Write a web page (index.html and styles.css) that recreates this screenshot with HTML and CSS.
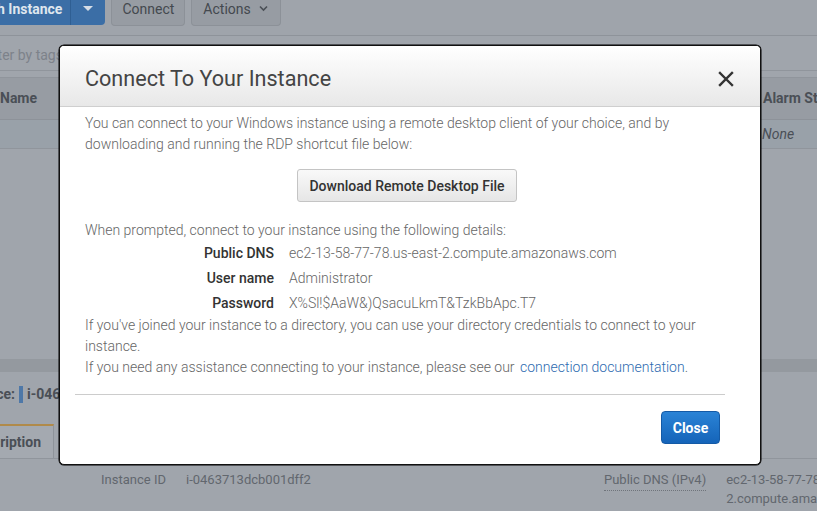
FILE: index.html
```html
<!DOCTYPE html>
<html>
<head>
<meta charset="utf-8">
<link rel="stylesheet" href="styles.css">
</head>
<body>
<div class="page">
  <div class="toolbar">
    <div class="btn-launch"><span class="launch-text">Launch Instance</span><span class="launch-caret"><svg width="12" height="8" viewBox="0 0 12 8"><path d="M1 1 L6 6 L11 1 Z" fill="#d6dde6"/></svg></span></div>
    <div class="btn-gray">Connect</div>
    <div class="btn-gray actions">Actions <svg width="9" height="7" viewBox="0 0 9 7"><path d="M1 1.5 L4.5 5 L8 1.5" fill="none" stroke="#4a4f56" stroke-width="1.6"/></svg></div>
  </div>
  <div class="filter-row"><div class="filter-input">Filter by tags and attributes or search by keyword</div></div>
  <div class="grid-head"><span class="col-name">Name</span><span class="col-alarm">Alarm Status</span></div>
  <div class="grid-row"><span class="col-alarm none">None</span></div>
  <div class="grid-empty"></div>
  <div class="splitter"></div>
  <div class="instance-line"><span class="inst-label">Instance:</span><span class="inst-mark"></span><span class="inst-id">i-0463713dcb001dff2</span></div>
  <div class="tabs"><div class="tab active">Description</div><div class="tab">Status Checks</div></div>
  <div class="details">
    <div class="det-col">
      <span class="det-label">Instance ID</span><span class="det-value">i-0463713dcb001dff2</span>
    </div>
    <div class="det-col right">
      <span class="det-label dotted">Public DNS (IPv4)</span><span class="det-value">ec2-13-58-77-78.us-east-<br>2.compute.amazonaws.com</span>
    </div>
  </div>
</div>

<div class="modal">
  <div class="modal-head">
    <h1>Connect To Your Instance</h1>
    <svg class="close-x" width="16" height="16" viewBox="0 0 16 16"><path d="M2 2 L14 14 M14 2 L2 14" stroke="#333" stroke-width="2.4" stroke-linecap="square"/></svg>
  </div>
  <div class="modal-body">
    <p>You can connect to your Windows instance using a remote desktop client of your choice, and by downloading and running the RDP shortcut file below:</p>
    <div class="dl-wrap"><button class="btn-dl">Download Remote Desktop File</button></div>
    <p>When prompted, connect to your instance using the following details:</p>
    <div class="details-table">
      <span class="k">Public DNS</span><span class="v">ec2-13-58-77-78.us-east-2.compute.amazonaws.com</span>
      <span class="k">User name</span><span class="v">Administrator</span>
      <span class="k">Password</span><span class="v">X%Sl!$AaW&amp;)QsacuLkmT&amp;TzkBbApc.T7</span>
    </div>
    <p class="after">If you've joined your instance to a directory, you can use your directory credentials to connect to your instance.<br>If you need any assistance connecting to your instance, please see our <a class="link">connection documentation</a>.</p>
  </div>
  <div class="modal-foot"><button class="btn-close">Close</button></div>
</div>
</body>
</html>
```

FILE: styles.css
```css
html, body { margin: 0; padding: 0; }
body {
  width: 817px; height: 511px; overflow: hidden;
  background: #a0a5ac;
  font-family: Roboto, "Liberation Sans", sans-serif;
  position: relative;
}
.page { width: 817px; height: 511px; background: #a0a5ac; color: #4a4f56; font-size: 14px; overflow: hidden; }

.toolbar {
  height: 35px; border-bottom: 1px solid #8e939a; display: flex; align-items: flex-start; gap: 6px;
  background: #9fa4ab;
}
.btn-launch {
  display: flex; margin-left: -49px; margin-top: -8px; height: 33px; border-radius: 0 0 4px 4px; overflow: hidden;
  background: #3b6ea6; color: #dfe6ee; font-weight: 700; font-size: 14px; flex-shrink: 0;
}
.launch-text { padding: 0 8px; line-height: 34px; white-space: nowrap; }
.launch-caret { width: 34px; display: flex; align-items: center; justify-content: center; border-left: 1px solid #2f5f93; }
.btn-gray {
  margin-top: -8px; height: 33px; line-height: 34px; padding: 0 10px; background: #979ca3; border: 1px solid #8c9198;
  border-top: 0; border-radius: 0 0 4px 4px; font-size: 14px; color: #44494f; display: flex; align-items: center; gap: 6px;
}
.btn-gray.actions { padding: 0 12px 0 11px; gap: 8px; }
.filter-row { height: 34px; border-bottom: 1px solid #90959c; background: #a0a5ac; }
.filter-input { margin-left: -17px; line-height: 38px; color: #7d828a; font-size: 14px; white-space: nowrap; }
.grid-head {
  margin-top: 6px; height: 41px; border-top: 1px solid #90959c; border-bottom: 1px solid #8d9299; background: #979ca3;
  position: relative; font-weight: 700; font-size: 14px; color: #4a4f56;
}
.col-name { position: absolute; left: 0; top: 12px; }
.grid-head .col-alarm { position: absolute; left: 763px; top: 12px; white-space: nowrap; }
.grid-row { height: 28px; background: #99a1a9; border-bottom: 1px solid #90959c; position: relative; }
.grid-row .none { position: absolute; left: 762px; top: 6px; font-style: italic; color: #4a4f56; font-size: 14px; }
.grid-empty { height: 210px; }
.splitter { height: 13px; background: #94999f; }
.instance-line { height: 44px; display: flex; align-items: center; gap: 4px; margin-left: -43px; font-weight: 700; color: #4a4f56; font-size: 14px; }
.inst-mark { width: 4px; height: 17px; background: #4e78a8; }
.tabs { display: flex; gap: 8px; margin: 8px 0 0 -44px; border-bottom: 1px solid #90959c; height: 34px; }
.tab { padding: 0 12px; line-height: 32px; border: 1px solid #8e939a; border-bottom: 0; background: #a4a9b0; font-size: 14px; color: #4a4f56; }
.tab.active { border-top: 2px solid #b08a4a; font-weight: 700; }
.details { display: flex; padding-top: 11px; }
.det-col { display: flex; gap: 20px; width: 500px; flex-shrink: 0; }
.det-col.right { width: auto; gap: 20px; margin-left: 104px; }
.det-label { width: 166px; text-align: right; color: #62676e; font-size: 13px; line-height: 19px; white-space: nowrap; flex-shrink: 0; }
.det-col.right .det-label { width: auto; }
.det-value { color: #62676e; font-size: 13px; line-height: 19px; white-space: nowrap; }
.dotted { border-bottom: 1px dotted #6f747b; height: 20px; }

.modal {
  position: absolute; left: 59px; top: 45px; width: 700px; height: 418px;
  background: #fff; border: 1px solid #111; border-radius: 5px; overflow: hidden;
  box-shadow: 0 0 0 0.5px #000;
}
.modal-head {
  height: 60px; border-bottom: 1px solid #cfcfcf;
  background: linear-gradient(#ffffff, #e8e8e8);
  display: flex; align-items: center; justify-content: space-between; padding: 0 26px 0 25px;
}
.modal-head h1 { margin: 0; font-size: 21.6px; font-weight: 400; color: #444; padding-top: 5px; }
.close-x { margin-top: 5px; }
.modal-body { padding: 6px 25px 0 25px; color: #666; font-size: 14px; line-height: 21px; font-weight: 300; }
.modal-body p { margin: 0; }
.dl-wrap { display: flex; justify-content: center; padding: 14px 0 18px; margin-left: -6px; }
.btn-dl {
  font-family: inherit; font-size: 14px; font-weight: 500; color: #333; height: 33px; padding: 0 11px;
  background: linear-gradient(#f9f9f9, #e6e6e6); border: 1px solid #c4c4c4; border-radius: 3px;
}
.details-table { display: grid; grid-template-columns: 189px auto; column-gap: 15px; row-gap: 4px; margin: 2px 0 0; }
.details-table .k { text-align: right; font-weight: 500; color: #333; }
.details-table .v { color: #666; }
.modal-body p.after { margin-top: 1px; }
.link { color: #2e6bb0; margin-left: 2px; }
.modal-foot { margin: 16px 35px 0 15px; border-top: 1px solid #ccc; display: flex; justify-content: flex-end; padding: 16px 5px 0 0; }
.btn-close {
  font-family: inherit; font-size: 14px; font-weight: 700; color: #fff; height: 33px; width: 59px;
  background: linear-gradient(#2a83d6, #1564b9); border: 1px solid #145aa6; border-radius: 4px;
}
```
